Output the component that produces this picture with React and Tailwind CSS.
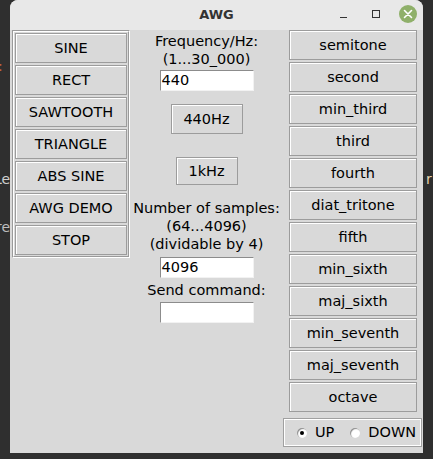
import React from 'react';

const waves = ['SINE', 'RECT', 'SAWTOOTH', 'TRIANGLE', 'ABS SINE', 'AWG DEMO', 'STOP'];
const intervals = [
  'semitone',
  'second',
  'min_third',
  'third',
  'fourth',
  'diat_tritone',
  'fifth',
  'min_sixth',
  'maj_sixth',
  'min_seventh',
  'maj_seventh',
  'octave',
];

const btn =
  'flex items-center justify-center border border-[#9c9c9c] bg-[#d9d9d9] shadow-[inset_1px_1px_0_#ffffff] text-black leading-none';

const Entry = ({ value }) => (
  <div className="w-[94px] h-[21px] bg-white border-t border-l border-[#8c8c8c] border-r-[#f2f2f2] border-b-[#f2f2f2] border-r border-b flex items-center pl-[1px] text-[14.5px] leading-none text-black">
    {value}
  </div>
);

const Radio = ({ checked, label }) => (
  <div className="flex items-center gap-[8px]">
    <div className="w-[10px] h-[10px] rounded-full bg-white shadow-[inset_1px_1px_1px_#8a8a8a] flex items-center justify-center">
      {checked && <div className="w-[4px] h-[4px] rounded-full bg-black" />}
    </div>
    <span className="text-[14.5px] leading-none text-black">{label}</span>
  </div>
);

export default function App() {
  return (
    <div className="relative w-[433px] h-[459px] bg-[#2f2f2f] overflow-hidden font-['DejaVu_Sans',sans-serif]">
      {/* bits of the desktop behind the window */}
      <span className="absolute left-[-2px] top-[56px] text-[14px] text-[#c8643c]">:</span>
      <span className="absolute left-[-6px] top-[169px] text-[14px] text-[#cfcfcf]">Le</span>
      <span className="absolute left-[-4px] top-[217px] text-[14px] text-[#bdbdbd]">re</span>
      <span className="absolute left-[426px] top-[169px] text-[14px] text-[#e6d2b0]">r</span>

      <div className="absolute left-[10px] top-0 w-[413px] h-[453px] rounded-t-[8px] bg-[#d9d9d9] flex flex-col overflow-hidden">
        {/* title bar */}
        <div className="relative h-[30px] bg-[#e8e8e8] flex items-center justify-center">
          <span className="font-bold text-[13px] text-[#333333]">AWG</span>
          <div className="absolute right-[6px] top-[5px] flex items-center">
            <div className="w-[7px] h-[1px] bg-[#333333] mt-[6px] mr-[25px]" />
            <div className="w-[8px] h-[8px] border border-[#333333] mr-[19px]" />
            <div className="w-[18px] h-[18px] rounded-full bg-[#8fb06a] flex items-center justify-center">
              <svg width="10" height="10" viewBox="0 0 10 10">
                <path d="M1.5 1.5 L8.5 8.5 M8.5 1.5 L1.5 8.5" stroke="#ffffff" strokeWidth="1.6" strokeLinecap="round" />
              </svg>
            </div>
          </div>
        </div>

        {/* body */}
        <div className="flex flex-row items-start">
          {/* waveform buttons */}
          <div className="ml-[2px] w-[118px] border-t border-l border-[#9a9a9a] border-r border-b border-r-white border-b-white">
            <div className="border-t border-l border-white border-r border-b border-r-[#9a9a9a] border-b-[#9a9a9a] p-[1px] flex flex-col gap-[2px]">
              {waves.map((w) => (
                <div key={w} className={`${btn} h-[30px] text-[14.5px]`}>
                  {w}
                </div>
              ))}
            </div>
          </div>

          {/* middle column */}
          <div className="w-[153px] pt-[2px] flex flex-col items-center text-[14.5px] text-black">
            <div className="h-[18px] leading-[18px]">Frequency/Hz:</div>
            <div className="h-[18px] leading-[18px]">(1...30_000)</div>
            <div className="mt-[2px]">
              <Entry value="440" />
            </div>
            <div className={`${btn} mt-[13px] w-[72px] h-[30px]`}>440Hz</div>
            <div className={`${btn} mt-[23px] w-[62px] h-[28px]`}>1kHz</div>
            <div className="mt-[14px] h-[18px] leading-[18px] whitespace-nowrap">Number of samples:</div>
            <div className="h-[18px] leading-[18px]">(64...4096)</div>
            <div className="h-[18px] leading-[18px]">(dividable by 4)</div>
            <div className="mt-[4px]">
              <Entry value="4096" />
            </div>
            <div className="mt-[3px] h-[18px] leading-[18px]">Send command:</div>
            <div className="mt-[3px]">
              <Entry value="" />
            </div>
          </div>

          {/* interval buttons */}
          <div className="w-[140px] flex flex-col">
            <div className="ml-[6px] w-[128px] flex flex-col gap-[2px]">
              {intervals.map((i) => (
                <div key={i} className={`${btn} h-[30px] text-[14.5px]`}>
                  {i}
                </div>
              ))}
            </div>
            <div className="mt-[6px] w-[139px] h-[29px] border-t border-l border-[#a0a0a0] border-r border-b border-r-[#a0a0a0] border-b-[#a0a0a0]">
              <div className="h-full border border-white flex items-center pl-[12px] gap-[16px]">
                <Radio checked label="UP" />
                <Radio label="DOWN" />
              </div>
            </div>
          </div>
        </div>
      </div>
    </div>
  );
}
